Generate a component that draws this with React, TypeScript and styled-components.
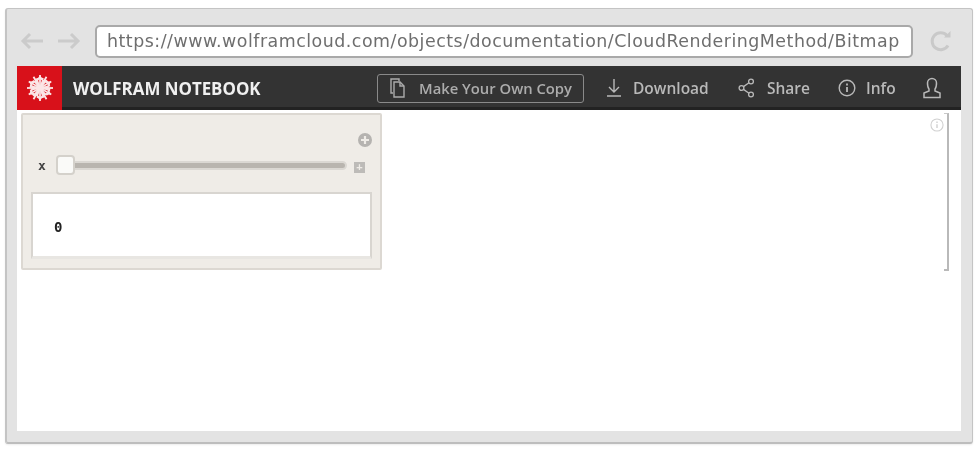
import * as React from 'react';
import styled, { createGlobalStyle } from 'styled-components';

const GlobalStyle = createGlobalStyle`
  html, body {
    background: #ffffff;
    margin: 0;
    padding: 0;
  }
`;

const Page = styled.div`
  box-sizing: border-box;
  filter: blur(0.6px);
  height: 450px;
  padding: 8px 0 0 5px;
  width: 978px;
`;

const BrowserWindow = styled.div`
  background: #e3e3e3;
  border: 1px solid #c4c4c4;
  border-bottom: 2px solid #bdbdbd;
  border-left: 2px solid #c4c4c4;
  border-radius: 3px;
  box-shadow: 0 1px 2px rgba(0, 0, 0, 0.08);
  box-sizing: border-box;
  display: flex;
  flex-direction: column;
  height: 436px;
  padding: 0 11px 11px 10px;
  width: 968px;
`;

const Toolbar = styled.div`
  align-items: center;
  box-sizing: border-box;
  display: flex;
  flex: none;
  height: 57px;
  padding-top: 7px;
`;

const NavArrows = styled.div`
  align-items: center;
  color: #cbcbcb;
  display: flex;
  gap: 13px;
  margin-left: 3px;
  width: 75px;
`;

const UrlBar = styled.div`
  background: #ffffff;
  border: 2px solid #a9a9a9;
  border-radius: 5px;
  box-sizing: border-box;
  color: #6e6e6e;
  font-family: 'DejaVu Sans', sans-serif;
  font-size: 17.4px;
  height: 33px;
  letter-spacing: 0.51px;
  line-height: 29px;
  overflow: hidden;
  padding-left: 10px;
  white-space: nowrap;
  width: 818px;
`;

const Reload = styled.div`
  color: #c9c9c9;
  display: flex;
  margin-left: 17px;
`;

const Content = styled.div`
  background: #ffffff;
  display: flex;
  flex: 1;
  flex-direction: column;
  min-height: 0;
`;

const NavBar = styled.div`
  background: #333333;
  border-bottom: 3px solid #222222;
  box-sizing: border-box;
  color: #b9b9b9;
  display: flex;
  flex: none;
  font-family: 'Open Sans', sans-serif;
  font-size: 15.5px;
  font-weight: 600;
  height: 44px;
`;

const LogoTile = styled.div`
  align-items: center;
  background: #d8111a;
  display: flex;
  flex: none;
  height: 44px;
  justify-content: center;
  margin-bottom: -3px;
  width: 45px;
`;

const NavItems = styled.div`
  align-items: center;
  display: flex;
  flex: 1;
  padding-top: 3px;
`;

const Brand = styled.div`
  color: #f0f0f0;
  font-size: 16.9px;
  font-weight: 700;
  margin-left: 11px;
  white-space: nowrap;
  width: 304px;
`;

const CopyButton = styled.div`
  align-items: center;
  border: 1px solid #8a8a8a;
  border-radius: 3px;
  box-sizing: border-box;
  color: #acacac;
  display: flex;
  flex: none;
  font-size: 14.8px;
  gap: 13px;
  height: 29px;
  margin-right: 22px;
  padding-left: 12px;
  white-space: nowrap;
  width: 207px;
`;

const NavButton = styled.div<{ $width: number; $gap: number }>`
  align-items: center;
  display: flex;
  flex: none;
  gap: ${(p) => p.$gap}px;
  height: 29px;
  white-space: nowrap;
  width: ${(p) => p.$width}px;
`;

const Notebook = styled.div`
  align-items: flex-start;
  display: flex;
  flex: 1;
  padding: 3px 12px 0 4px;
`;

const ManipulatePanel = styled.div`
  background: #efece7;
  border: 2px solid #dcd8d2;
  border-radius: 2px;
  box-sizing: border-box;
  display: flex;
  flex: none;
  flex-direction: column;
  height: 157px;
  padding: 0 8px 9px;
  width: 361px;
`;

const AddRow = styled.div`
  color: #b5b3b0;
  display: flex;
  height: 30px;
  justify-content: flex-end;
  padding-top: 18px;
`;

const SliderRow = styled.div`
  align-items: center;
  display: flex;
  height: 26px;
  margin-top: -11px;
  padding-left: 7px;
`;

const VarLabel = styled.span`
  color: #444444;
  font-family: 'DejaVu Sans Mono', monospace;
  font-size: 13px;
  font-weight: 700;
  margin-top: 1px;
  width: 17px;
`;

const SliderTrack = styled.div`
  background: #b9b5af;
  border: 2px solid #dbd8d3;
  border-radius: 5px;
  box-sizing: border-box;
  height: 9px;
  margin-left: 1px;
  position: relative;
  width: 291px;
`;

const SliderThumb = styled.div`
  background: #fafaf8;
  border: 2px solid #d4d1cb;
  border-radius: 4px;
  box-sizing: border-box;
  height: 20px;
  left: -2px;
  position: absolute;
  top: -8px;
  width: 19px;
`;

const ExpandButton = styled.div`
  align-items: center;
  background: #bdbbb8;
  color: #efece7;
  display: flex;
  font-family: 'Liberation Sans', sans-serif;
  font-size: 11px;
  font-weight: 700;
  height: 11px;
  justify-content: center;
  margin: 4px 0 0 7px;
  width: 11px;
`;

const OutputBox = styled.div`
  align-items: center;
  background: #ffffff;
  border: 2px solid #d8d5d0;
  border-bottom: 3px solid #e8e6e2;
  box-sizing: border-box;
  color: #222222;
  display: flex;
  flex: 1;
  font-family: 'DejaVu Sans Mono', monospace;
  font-size: 14px;
  font-weight: 700;
  margin-top: 14px;
  padding: 3px 0 0 21px;
`;

const CellMeta = styled.div`
  align-items: flex-start;
  display: flex;
  flex: none;
  margin-left: auto;
`;

const InfoGlyph = styled.div`
  color: #d0d0d0;
  display: flex;
  margin-top: 5px;
`;

const CellBracket = styled.div`
  border-bottom: 2px solid #b9b9b9;
  border-right: 2px solid #b9b9b9;
  border-top: 1px solid #c9c9c9;
  box-sizing: border-box;
  height: 158px;
  width: 5px;
`;

const ArrowIcon = ({ flip }: { flip?: boolean }) => (
  <svg width="24" height="20" viewBox="0 0 24 20" fill="none" stroke="currentColor" strokeWidth="3" style={flip ? { transform: 'scaleX(-1)' } : undefined}>
    <path d="M23 10H3M10 3l-7 7 7 7" />
  </svg>
);

const ReloadIcon = () => (
  <svg width="22" height="22" viewBox="0 0 22 22" fill="none" stroke="currentColor" strokeWidth="3">
    <path d="M18 15.500A8.500 8.500 0 1 1 17 5.500" />
    <path d="M14 7.500h6.500v-6.500z" fill="currentColor" stroke="none" />
  </svg>
);

const WolframLogo = () => (
  <svg width="28" height="28" viewBox="0 0 28 28" fill="none" stroke="#fbe6e6" strokeWidth="1.8">
    {[0, 30, 60, 90, 120, 150].map((a) => (
      <path key={a} d="M14 1v26" transform={`rotate(${a} 14 14)`} />
    ))}
    {[0, 60, 120, 180, 240, 300].map((a) => (
      <path key={a} d="M14 3l4.500 5.500L14 14l-4.500-5.500z" transform={`rotate(${a} 14 14)`} />
    ))}
    <circle cx="14" cy="14" r="9.500" strokeDasharray="3 2" />
  </svg>
);

const CopyIcon = () => (
  <svg width="16" height="20" viewBox="0 0 16 20" fill="none" stroke="currentColor" strokeWidth="1.4">
    <path d="M3 15H1V1h8v2" />
    <path d="M4 4h6l4 4v11H4z" />
    <path d="M10 4v4h4" />
  </svg>
);

const DownloadIcon = () => (
  <svg width="16" height="20" viewBox="0 0 16 20" fill="none" stroke="currentColor" strokeWidth="1.4">
    <path d="M8 1v12M3 9l5 5 5-5M1 18h14" />
  </svg>
);

const ShareIcon = () => (
  <svg width="17" height="20" viewBox="0 0 17 20" fill="none" stroke="currentColor" strokeWidth="1.3">
    <circle cx="3.500" cy="10" r="2.400" />
    <circle cx="13" cy="3.500" r="2.400" />
    <circle cx="13" cy="16.500" r="2.400" />
    <path d="M5.500 8.600l5.500-3.800M5.500 11.400l5.500 3.800" />
  </svg>
);

const InfoIcon = ({ size = 18 }: { size?: number }) => (
  <svg width={size} height={size} viewBox="0 0 18 18" fill="none" stroke="currentColor" strokeWidth="1.4">
    <circle cx="9" cy="9" r="7.800" />
    <path d="M9 8v5M9 4.600v1.800" strokeWidth="1.800" />
  </svg>
);

const UserIcon = () => (
  <svg width="20" height="22" viewBox="0 0 20 22" fill="none" stroke="currentColor" strokeWidth="1.500">
    <path d="M7 14V12C5.500 10.500 5.500 8 5.500 6a4.500 4.500 0 0 1 9 0c0 2 0 4.500-1.500 6v2l5 2v4.500H2V16z" />
  </svg>
);

const PlusCircleIcon = () => (
  <svg width="14" height="14" viewBox="0 0 14 14">
    <circle cx="7" cy="7" r="7" fill="currentColor" />
    <path d="M7 3v8M3 7h8" stroke="#efece7" strokeWidth="2.200" />
  </svg>
);

export default function App() {
  return (
    <Page>
      <GlobalStyle />
      <BrowserWindow>
        <Toolbar>
          <NavArrows>
            <ArrowIcon />
            <ArrowIcon flip />
          </NavArrows>
          <UrlBar>https://www.wolframcloud.com/objects/documentation/CloudRenderingMethod/Bitmap</UrlBar>
          <Reload>
            <ReloadIcon />
          </Reload>
        </Toolbar>
        <Content>
          <NavBar>
            <LogoTile>
              <WolframLogo />
            </LogoTile>
            <NavItems>
              <Brand>WOLFRAM NOTEBOOK</Brand>
              <CopyButton>
                <CopyIcon />
                <span>Make Your Own Copy</span>
              </CopyButton>
              <NavButton $width={132} $gap={11}>
                <DownloadIcon />
                <span>Download</span>
              </NavButton>
              <NavButton $width={100} $gap={12}>
                <ShareIcon />
                <span>Share</span>
              </NavButton>
              <NavButton $width={84} $gap={10}>
                <InfoIcon />
                <span>Info</span>
              </NavButton>
              <UserIcon />
            </NavItems>
          </NavBar>
          <Notebook>
            <ManipulatePanel>
              <AddRow>
                <PlusCircleIcon />
              </AddRow>
              <SliderRow>
                <VarLabel>x</VarLabel>
                <SliderTrack>
                  <SliderThumb />
                </SliderTrack>
                <ExpandButton>+</ExpandButton>
              </SliderRow>
              <OutputBox>0</OutputBox>
            </ManipulatePanel>
            <CellMeta>
              <InfoGlyph>
                <InfoIcon size={14} />
              </InfoGlyph>
              <CellBracket />
            </CellMeta>
          </Notebook>
        </Content>
      </BrowserWindow>
    </Page>
  );
}
